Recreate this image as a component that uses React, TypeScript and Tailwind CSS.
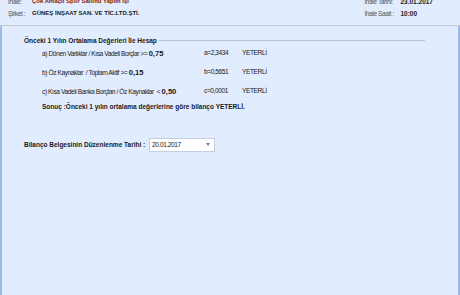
const rows = [
  { label: "a) Dönen Varlıklar / Kısa Vadeli Borçlar >=", limit: "0,75", value: "a=2,3434" },
  { label: "b) Öz Kaynaklar  / Toplam Aktif >=", limit: "0,15", value: "b=0,5651" },
  { label: "c) Kısa Vadeli Banka Borçları / Öz Kaynaklar  <", limit: "0,50", value: "c=0,0001" },
];

export default function App() {
  return (
    <div
      className="w-[460px] h-[295px] overflow-hidden whitespace-pre bg-[#e1edff] text-[6.6px] tracking-[-0.42px] text-[#1a1a1a] font-['Liberation_Sans',Arial,sans-serif] [&_b]:font-bold [&_b]:tracking-normal [&_b]:text-[6.5px]"
    >
      {/* header */}
      <div className="h-[26px] flex justify-between px-[8px] border-b border-[#c2cad6]">
        <div className="-mt-[4px] flex flex-col gap-[1px]">
          <div className="flex h-[11px] items-center">
            <span className="w-[24px] text-[#555]">İhale:</span>
            <b className="!text-[6px] text-[#8a1a00]">Çok Amaçlı Spor Salonu Yapım İşi</b>
          </div>
          <div className="flex h-[11px] items-center">
            <span className="w-[24px] text-[#555]">Şirket :</span>
            <b className="!text-[6px]">GÜNEŞ İNŞAAT SAN. VE TİC.LTD.ŞTİ.</b>
          </div>
        </div>
        <div className="-mt-[4px] mr-[19px] flex flex-col gap-[1px]">
          <div className="flex h-[11px] items-center">
            <span className="w-[36px] text-[#555]">İhale Tarihi:</span>
            <b>23.01.2017</b>
          </div>
          <div className="flex h-[11px] items-center">
            <span className="w-[36px] text-[#555]">İhale Saati :</span>
            <b>10:00</b>
          </div>
        </div>
      </div>

      {/* body */}
      <div className="h-[269px] border-l-2 border-r-2 border-[#9dbbe6] pt-[10px]">
        <div className="ml-[22px] mr-[33px] flex items-center gap-[2px]">
          <b>Önceki 1 Yılın Ortalama Değerleri İle Hesap</b>
          <div className="flex-1 h-px bg-[#b9c3cf]" />
        </div>
        <div className="ml-[40px] mt-[2px] flex flex-col gap-[8px]">
          {rows.map((r) => (
            <div key={r.value} className="flex h-[11px] items-center">
              <span className="w-[162px]">
                {r.label} <b className="!text-[7.6px]">{r.limit}</b>
              </span>
              <span className="w-[38px]">{r.value}</span>
              <span>YETERLİ</span>
            </div>
          ))}
          <div className="flex h-[11px] items-center -mt-[3px]">
            <b>Sonuç :Önceki 1 yılın ortalama değerlerine göre bilanço YETERLİ.</b>
          </div>
        </div>
        <div className="ml-[22px] mt-[25px] flex items-center">
          <span className="w-[125px]">
            <b>Bilanço Belgesinin Düzenlenme Tarihi :</b>
          </span>
          <div className="w-[66px] h-[14px] bg-white border border-[#c4d0e2] flex items-center justify-between pl-[2px] pr-[4px]">
            <span>20.01.2017</span>
            <svg width="4" height="3" viewBox="0 0 4 3">
              <path d="M0 0h4L2 3z" fill="#6b7fa0" />
            </svg>
          </div>
        </div>
      </div>
    </div>
  );
}
